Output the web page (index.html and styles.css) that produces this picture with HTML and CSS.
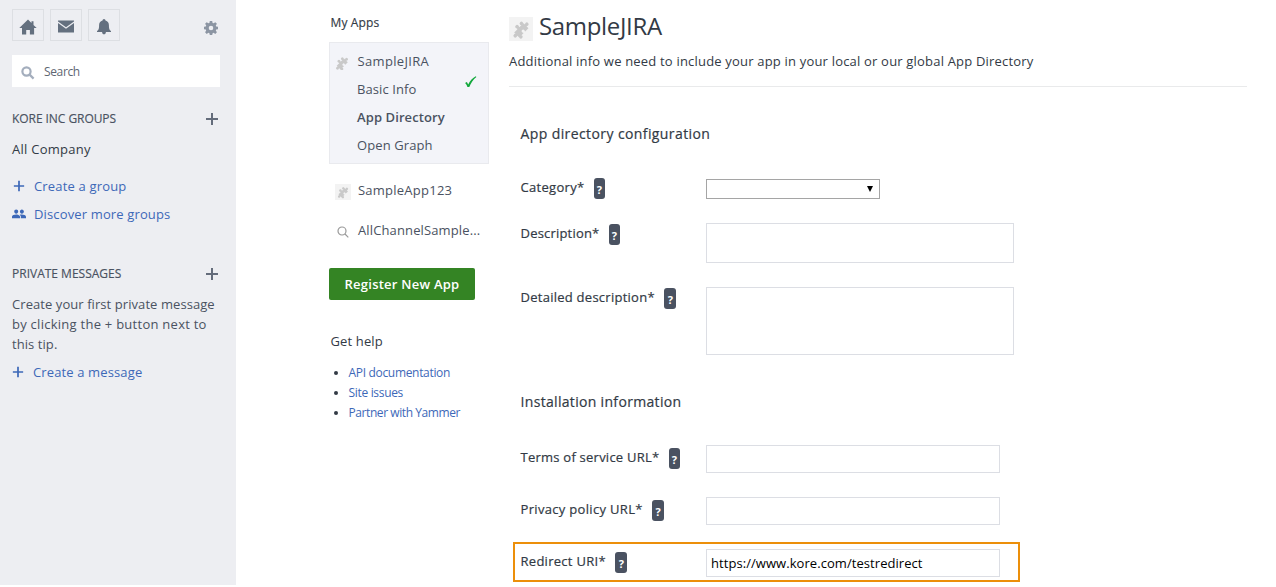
FILE: index.html
```html
<!DOCTYPE html>
<html lang="en">
<head>
<meta charset="utf-8">
<title>SampleJIRA - App Directory</title>
<link rel="stylesheet" href="styles.css">
</head>
<body>
<svg class="defs" aria-hidden="true">
  <symbol id="puzzle" viewBox="0 0 24 24">
    <g transform="translate(2.300 2.300) scale(.82) rotate(-45 12 12.500)">
      <path d="M3.500 9h5.600c.5-.5-.5-1.300-.5-2.400a2.300 2.300 0 0 1 4.600 0c0 1.100-1 1.900-.5 2.400h6.800v2c.5.500 1-.4 2-.4a2.200 2.200 0 0 1 0 4.400c-1 0-1.500-.9-2-.4v3h-5.600c-.5-.5.4-1.200.4-2a1.900 1.900 0 0 0-3.800 0c0 .8.900 1.500.4 2H3.500v-3c-.5-.5-1 .4-2 .4a2.200 2.200 0 0 1 0-4.400c1 0 1.500.9 2 .4z"/>
      <circle cx="17.500" cy="7.500" r="2.200"/>
      <circle cx="5.500" cy="18.500" r="2.200"/>
    </g>
  </symbol>
  <symbol id="plus" viewBox="0 0 14 14"><path d="M6 1h2v5h5v2H8v5H6V8H1V6h5z"/></symbol>
</svg>
<div class="page">
  <aside class="sidebar">
    <div class="toolbar">
      <span class="tool"><svg width="18" height="16" viewBox="0 0 18 16"><path d="M9 .5l3.500 3.400V2.200h2v3.700L17.700 9h-2.600v6.500h-4.200v-4.600H7.200v4.600H3V9H.3z"/></svg></span>
      <span class="tool"><svg width="16" height="13" viewBox="0 0 16 13"><path d="M0 .5h16v1L8 7.300 0 1.500zM0 3l8 5.700L16 3v9.500H0z"/></svg></span>
      <span class="tool"><svg width="14" height="16" viewBox="0 0 14 16"><path d="M5.500 1.500a1.500 1.500 0 0 1 3 0c2.300.7 3.400 2.400 3.400 4.500 0 3.500.4 5 2.100 6v1H8.900c0 1.400-.8 2.300-1.900 2.300s-1.900-.9-1.900-2.300H0v-1c1.700-1 2.100-2.500 2.100-6 0-2.100 1.100-3.800 3.400-4.500z"/></svg></span>
      <svg class="gear" width="14" height="14" viewBox="0 0 14 14"><path fill-rule="evenodd" d="M5.800 0h2.400l.4 1.900 1 .4 1.700-1.100 1.600 1.600-1.100 1.700.4 1 1.800.3v2.400l-1.800.4-.4 1 1.100 1.700-1.600 1.600-1.700-1.100-1 .4-.4 1.800H5.800l-.4-1.800-1-.4-1.700 1.100-1.600-1.600 1.100-1.700-.4-1L0 8.200V5.800l1.800-.3.4-1-1.100-1.700 1.600-1.600 1.700 1.100 1-.4zM7 4.700a2.300 2.300 0 1 0 0 4.600 2.300 2.300 0 0 0 0-4.600z"/></svg>
    </div>
    <div class="search">
      <svg width="14" height="14" viewBox="0 0 14 14"><circle cx="5.500" cy="5.500" r="4.100"/><path d="M8.600 8.600l4 4"/></svg>
      <span>Search</span>
    </div>
    <div class="group-head"><span class="t-kore">KORE INC GROUPS</span><svg width="14" height="14"><use href="#plus"/></svg></div>
    <div class="company">All Company</div>
    <a class="side-link first"><svg width="12" height="12"><use href="#plus"/></svg><span>Create a group</span></a>
    <a class="side-link discover"><svg width="14" height="10" viewBox="0 0 14 10"><path d="M4.200.4a2.100 2.100 0 0 1 2 2.200c0 1.200-.9 2.200-2 2.200s-2-1-2-2.200a2.100 2.100 0 0 1 2-2.200zM9.900.4c1.100 0 2 1 2 2.200s-.9 2.200-2 2.200-2-1-2-2.200 .9-2.200 2-2.200zM0 9.300V7.600c0-1.300 2-2.100 4.200-2.100 1 0 2.600.4 3.400 1.200.4.500.6 1 .6 1.700v.9zM9 9.300c.2-1.700-.3-2.800-1.300-3.600C10.500 5 14 6 14 7.700v1.600z"/></svg><span>Discover more groups</span></a>
    <div class="group-head messages"><span>PRIVATE MESSAGES</span><svg width="14" height="14"><use href="#plus"/></svg></div>
    <p class="tip">Create your first private message<br><span class="tip-mid">by clicking the + button next to</span><br>this tip.</p>
    <a class="side-link message"><svg width="12" height="12"><use href="#plus"/></svg><span>Create a message</span></a>
  </aside>

  <nav class="apps">
    <h2 class="my-apps">My Apps</h2>
    <div class="current">
      <div class="item name"><svg class="mini" width="14" height="14" viewBox="3 3 18 18"><use href="#puzzle" width="24" height="24"/></svg><span>SampleJIRA</span></div>
      <div class="item"><span>Basic Info</span><svg class="check" width="12" height="12" viewBox="0 0 12 12"><path d="M0 7l1.900-1.100 1.300 2.700C5 4.900 7 2.200 10.700.2l.7.700C8.200 3.500 5.800 7 4.300 11H2.400C1.900 9.200 1.200 8 0 7z"/></svg></div>
      <div class="item active"><span>App Directory</span></div>
      <div class="item"><span>Open Graph</span></div>
    </div>
    <div class="app"><svg class="tile" width="16" height="16"><use href="#puzzle"/></svg><span class="t-app">SampleApp123</span></div>
    <div class="app"><svg class="lens" width="12" height="12" viewBox="0 0 12 12"><circle cx="5" cy="5" r="4"/><path d="M8 8l3.300 3.300"/></svg><span class="t-channel">AllChannelSample...</span></div>
    <button class="register">Register New App</button>
    <h3 class="help">Get help</h3>
    <ul class="links">
      <li><a>API documentation</a></li>
      <li><a>Site issues</a></li>
      <li><a class="t-partner">Partner with Yammer</a></li>
    </ul>
  </nav>

  <main class="main">
    <header class="title">
      <svg class="tile" width="24" height="24"><use href="#puzzle"/></svg>
      <h1>SampleJIRA</h1>
    </header>
    <div class="sub">Additional info we need to include your app in your local or our global App Directory</div>
    <section class="form">
      <h2>App directory configuration</h2>
      <div class="row category"><label><span>Category*</span><b class="q">?</b></label><div class="select"><i></i></div></div>
      <div class="row short"><label><span>Description*</span><b class="q">?</b></label><div class="area"></div></div>
      <div class="row tall"><label><span>Detailed description*</span><b class="q wide">?</b></label><div class="area"></div></div>
      <h2 class="install">Installation information</h2>
      <div class="row line"><label><span>Terms of service URL*</span><b class="q">?</b></label><div class="input"></div></div>
      <div class="row line privacy"><label><span>Privacy policy URL*</span><b class="q wide">?</b></label><div class="input"></div></div>
      <div class="row line marked"><label><span>Redirect URI*</span><b class="q wide">?</b></label><div class="input">https://www.kore.com/testredirect</div></div>
    </section>
  </main>
</div>
</body>
</html>
```
FILE: styles.css
```css
* { box-sizing: border-box; }
body {
  margin: 0;
  background: #fff;
  color: #323a45;
  font: 13px/20px "Open Sans", "Noto Sans", sans-serif;
}
h1, h2, h3, p, ul { margin: 0; padding: 0; font-weight: 400; }
svg { display: block; flex: none; }
span, a, h1, h2, h3 { white-space: nowrap; }
.defs { position: absolute; width: 0; height: 0; }
.page { display: flex; height: 587px; overflow: hidden; }

.sidebar { width: 236px; height: 585px; padding: 9px 16px 0 12px; background: #edeef2; color: #4a5261; flex: none; }
.toolbar { display: flex; gap: 6px; }
.tool { width: 32px; height: 32px; border: 1px solid #dddfe3; display: flex; align-items: center; justify-content: center; padding-top: 3px; }
.tool svg { fill: #64707f; }
.gear { margin: 12px 2px 0 auto; fill: #8c95a3; }
.search { display: flex; align-items: center; gap: 9px; height: 32px; margin-top: 14px; padding: 0 9px; background: #fff; color: #5e6673; font-size: 12px; letter-spacing: -.36px; }
.search span { padding-top: 2px; }
.search svg { fill: none; stroke: #a4aebd; stroke-width: 2.2; margin-top: 4px; }
.group-head { display: flex; align-items: center; justify-content: space-between; height: 24px; margin-top: 20px; padding-right: 1px; font-size: 12px; }
.group-head svg { fill: #646c7b; }
.group-head span { -webkit-text-stroke: .15px currentColor; }
.t-kore { letter-spacing: -.06px; }
.company { margin-top: 8px; color: #323a45; letter-spacing: .27px; }
.side-link { display: flex; align-items: center; gap: 9px; height: 28px; padding-left: 1px; color: #3d68b8; letter-spacing: .17px; }
.side-link svg { fill: currentColor; }
.first { margin-top: 13px; }
.discover { gap: 8px; padding-left: 0; letter-spacing: .14px; }
.messages { margin-top: 34px; }
.tip { margin-top: 8px; letter-spacing: .07px; }
.tip-mid { letter-spacing: .26px; }
.message { margin-top: 4px; padding-left: 0; letter-spacing: .13px; }

.apps { width: 160px; margin-left: 93px; padding-top: 13px; flex: none; color: #4a5261; }
.my-apps { padding-left: 1.5px; font-size: 12px; color: #323a45; letter-spacing: .12px; -webkit-text-stroke: .15px currentColor; }
.current { margin-top: 9px; padding: 4px 0; border: 1px solid #e9eaee; background: #f3f4f9; }
.item { display: flex; align-items: center; height: 28px; padding-left: 27px; letter-spacing: .1px; }
.name { letter-spacing: .33px; }
.mini { margin: 3px 8.5px 0 -22px; fill: #c9c9c9; }
.check { margin: -14px 11px 0 auto; fill: #12a83c; }
.active { font-weight: 600; }
.app { display: flex; align-items: center; height: 40px; padding-left: 6px; }
.current + .app { margin-top: 6px; }
.tile { background: #f3f3f3; fill: #c9c9c9; }
.app .tile { margin: 4px 7px 0 0; }
.t-app { letter-spacing: .24px; }
.t-channel { letter-spacing: .13px; }
.lens { margin: 4px 9px 0 2px; fill: none; stroke: #999; stroke-width: 1.2; }
.register { display: flex; align-items: center; justify-content: center; width: 146px; height: 32px; margin: 18px 0 0; padding: 0; border: 0; border-radius: 2px; background: #348424; color: #fff; font: 600 13px/20px "Open Sans", sans-serif; letter-spacing: .24px; }
.help { margin-top: 31px; padding-left: 1.5px; font-size: 13px; color: #323a45; letter-spacing: .13px; }
.links { margin-top: 12px; padding-left: 19.5px; font-size: 12px; color: #323a45; letter-spacing: -.32px; }
.links a { color: #3d68b8; }
.t-partner { letter-spacing: -.42px; }

.main { width: 738px; margin-left: 20px; padding-top: 11px; flex: none; }
.title { display: flex; height: 32px; align-items: center; }
.title .tile { margin: 4px 6px 0 0; }
.title h1 { margin-top: -2px; font-size: 24px; line-height: 32px; letter-spacing: -.33px; }
.sub { height: 44px; padding-top: 8px; border-bottom: 1px solid #e9eaeb; letter-spacing: .19px; }
.form { padding-left: 11.5px; }
.form h2 { margin-top: 37px; font-size: 14px; line-height: 20px; letter-spacing: .4px; -webkit-text-stroke: .2px currentColor; }
.row { display: flex; }
.row label { display: flex; width: 185.5px; flex: none; }
.row label span { -webkit-text-stroke: .2px currentColor; }
.q { width: 11px; height: 21px; margin: 1px 0 0 9.500px; flex: none; border-radius: 3px; background: #4a5261; color: #fff; font-size: 11px; line-height: 23px; letter-spacing: 0; text-align: center; }
.q.wide { width: 12px; }
.select { display: flex; width: 174px; height: 20px; margin-top: 2px; border: 1px solid #a5a5a5; }
.select i { margin: 6px 6px 0 auto; height: 0; border: 3.5px solid transparent; border-top: 6px solid #000; border-bottom: 0; }
.category { margin-top: 33px; height: 46px; letter-spacing: .3px; }
.short { height: 64px; letter-spacing: .2px; }
.tall { letter-spacing: .26px; }
.area { width: 308px; border: 1px solid #dcdee4; }
.short .area { height: 40px; }
.tall .area { height: 68px; }
.form .install { margin-top: 37px; margin-bottom: 33px; letter-spacing: .32px; }
.line { height: 28px; margin-bottom: 24px; letter-spacing: .24px; }
.line label { padding-top: 2px; }
.privacy { letter-spacing: .32px; }
.input { width: 294px; height: 28px; padding: 3px 4px; border: 1px solid #dcdee4; color: #000; letter-spacing: .06px; }
.marked { width: 507.5px; height: 40px; margin: -7px 0 0 -8px; padding: 5px 0 0 6px; border: 2px solid #ec8f0a; letter-spacing: .28px; }
```
